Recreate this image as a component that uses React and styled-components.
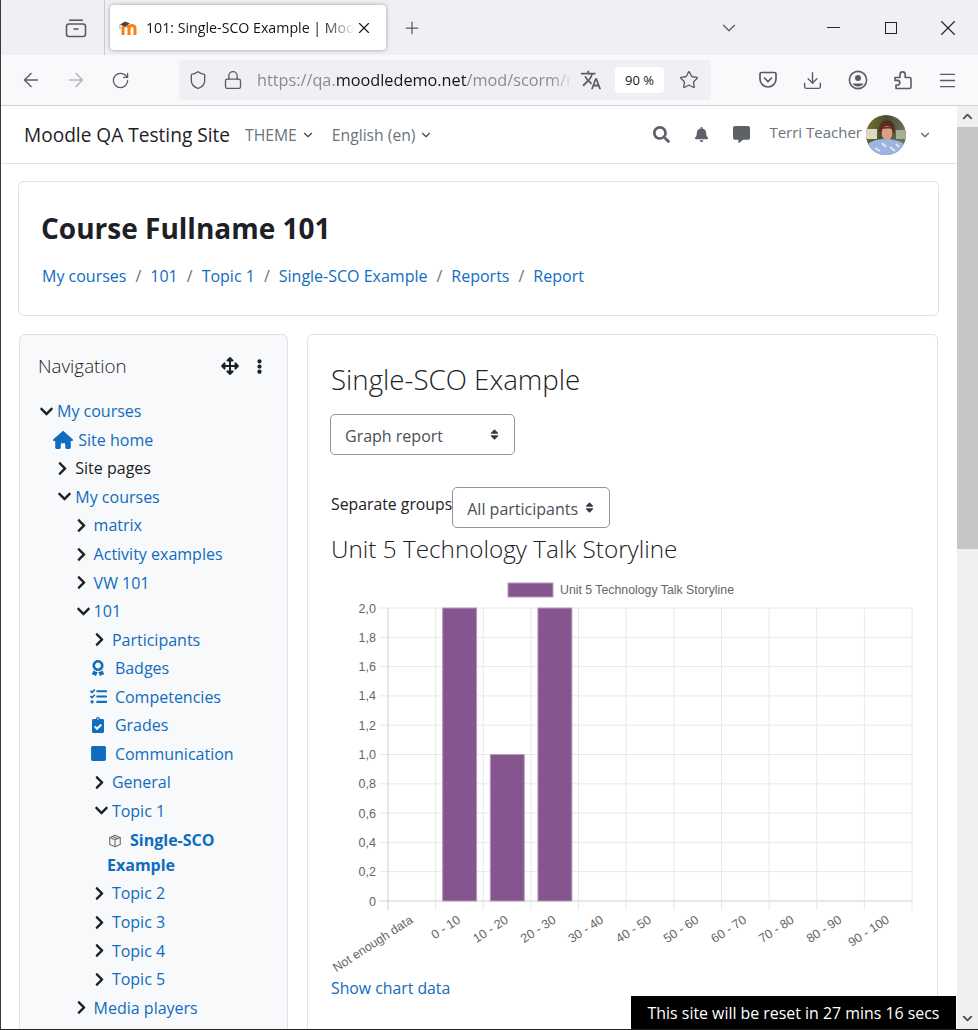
import styled, { createGlobalStyle } from 'styled-components'
import { ArrowLeft, ArrowRight, RotateCw, Shield, Lock, Star, Download, Menu, X, Plus, ChevronDown, ChevronUp, Minus } from 'lucide-react'
import { MdTranslate } from 'react-icons/md'
import {
  FaAward, FaClipboardCheck, FaSquare, FaArrowsAlt, FaEllipsisV, FaSearch, FaBell,
  FaCommentAlt, FaChevronRight, FaChevronDown, FaSort, FaTasks,
} from 'react-icons/fa'
import { FaHouse } from 'react-icons/fa6'

const Global = createGlobalStyle`
  html, body { margin: 0; padding: 0; background: white; }
  * { box-sizing: border-box; }
  body { font-family: "Open Sans", "Noto Sans", sans-serif; color: #1d2125; }
`

const Window = styled.div`
  width: 978px;
  height: 1030px;
  display: flex;
  flex-direction: column;
  overflow: hidden;
  position: relative;
  border-left: 1px solid #3a3a3a;
  border-bottom: 1px solid #222;
`

const TabBar = styled.div`
  height: 55px;
  flex: none;
  background: #f0f0f4;
  display: flex;
  align-items: center;
  color: #5b5b66;
`

const ViewBtn = styled.div`
  width: 104px;
  height: 100%;
  border-right: 1px solid #c9c9cf;
  display: flex;
  align-items: center;
  justify-content: flex-end;
  padding-right: 17px;
`

const Tab = styled.div`
  width: 276px;
  height: 45px;
  margin-left: 5px;
  background: white;
  border-radius: 4px;
  box-shadow: 0 0 4px rgba(0,0,0,.35);
  display: flex;
  align-items: center;
  padding: 0 13px 0 9px;
`

const TabTitle = styled.span`
  flex: 1;
  margin-left: 7px;
  font-size: 14.2px;
  color: #15141a;
  white-space: nowrap;
  overflow: hidden;
  -webkit-mask-image: linear-gradient(to right, black 85%, transparent 100%);
`

const TabPlus = styled.div`
  margin-left: 16px;
  display: flex;
`

const WinBtns = styled.div`
  margin-left: auto;
  margin-right: 2px;
  display: flex;
  align-items: center;
  color: #222;
`

const WinBtn = styled.div`
  width: 57px;
  display: flex;
  justify-content: center;
`

const TabsList = styled.div`
  color: #5b5b66;
  margin-right: 65px;
  display: flex;
`

const MaxBox = styled.div`
  width: 12px;
  height: 12px;
  border: 1px solid #222;
`

const ToolBar = styled.div`
  height: 51px;
  flex: none;
  background: #f9f9fb;
  border-bottom: 1px solid #cfcfd8;
  display: flex;
  align-items: center;
  padding-left: 7px;
  color: #5b5b66;
`

const ToolBtn = styled.div`
  width: 45px;
  display: flex;
  justify-content: center;
  color: ${props => props.$off ? '#b4b4ba' : '#5b5b66'};
`

const UrlBar = styled.div`
  width: 532px;
  height: 40px;
  margin: 0 34px 0 36px;
  background: #f0f0f4;
  border-radius: 4px;
  display: flex;
  align-items: center;
  padding-left: 1px;
`

const UrlIcon = styled.div`
  width: 35px;
  display: flex;
  justify-content: center;
  flex: none;
`

const UrlText = styled.div`
  width: 316px;
  margin-left: 7px;
  font-size: 16.25px;
  color: #8a8a94;
  white-space: nowrap;
  overflow: hidden;
  -webkit-mask-image: linear-gradient(to right, black 93%, transparent 100%);
  b { font-weight: 400; color: #15141a; }
`

const ZoomBadge = styled.div`
  width: 49px;
  height: 26px;
  margin: 0 7px 0 7px;
  background: white;
  border-radius: 4px;
  font-size: 13px;
  color: #15141a;
  display: flex;
  align-items: center;
  justify-content: center;
`

const Viewport = styled.div`
  flex: 1;
  min-height: 0;
  display: flex;
`

const Page = styled.div`
  flex: 1;
  min-width: 0;
  overflow: hidden;
`

const Scrollbar = styled.div`
  width: 21px;
  flex: none;
  background: #f0f0f0;
  display: flex;
  flex-direction: column;
  color: #505050;
`

const ScrollBtn = styled.div`
  height: 21px;
  flex: none;
  display: flex;
  align-items: center;
  justify-content: center;
  margin-top: ${props => props.$end ? 'auto' : '0'};
`

const ScrollThumb = styled.div`
  height: 422px;
  flex: none;
  background: #c6c6c6;
`

const SiteNav = styled.div`
  height: 58px;
  border-bottom: 1px solid #dee2e6;
  display: flex;
  align-items: center;
  padding-left: 23px;
`

const Brand = styled.div`
  font-size: 19.1px;
  color: #1d2125;
  margin-right: 15px;
`

const NavMenu = styled.div`
  font-size: 15.7px;
  color: #6a737b;
  display: flex;
  align-items: center;
  gap: 4px;
  margin-right: 17px;
  svg { color: #3f454b; }
`

const NavIcons = styled.div`
  margin-left: auto;
  padding-right: 13px;
  display: flex;
  align-items: center;
  color: #5c6268;
`

const NavIcon = styled.div`
  width: ${props => props.$w || 40}px;
  display: flex;
  justify-content: center;
`

const UserName = styled.div`
  font-size: 15px;
  color: #6a737b;
  margin: 0 4px 0 8px;
  padding-bottom: 5px;
`

const Avatar = styled.svg`
  width: 40px;
  height: 40px;
  display: block;
  margin-top: 1px;
`

const Content = styled.div`
  padding: 17px 18px 0 17px;
`

const HeaderCard = styled.div`
  height: 135px;
  border: 1px solid #dee2e6;
  border-radius: 6px;
  padding: 27px 23px 0;
  margin-bottom: 18px;
`

const CourseTitle = styled.h1`
  margin: 0 0 17px -1px;
  font-size: 28px;
  line-height: 38px;
  font-weight: 700;
  color: #1d2125;
`

const Crumbs = styled.div`
  font-size: 16px;
  line-height: 24px;
  color: #6a737b;
  display: flex;
  gap: 9px;
`

const Link = styled.span`
  color: #0f6cbf;
`

const Columns = styled.div`
  display: flex;
  gap: 19px;
  padding-left: 1px;
`

const NavBlock = styled.div`
  width: 269px;
  flex: none;
  height: 760px;
  background: #f8f9fa;
  border: 1px solid #dee2e6;
  border-radius: 6px;
  padding: 17px 0 0 18px;
`

const BlockHead = styled.div`
  height: 28px;
  display: flex;
  align-items: center;
  font-size: 18.8px;
  font-weight: 300;
  color: #1d2125;
  margin-bottom: 17px;
`

const BlockTools = styled.div`
  margin-left: auto;
  margin-right: 20px;
  display: flex;
  align-items: center;
  gap: 13px;
  color: #1d2125;
`

const Tree = styled.div`
  font-size: 16px;
  color: #1d2125;
  padding-left: 1px;
`

const Row = styled.div`
  height: 28.55px;
  display: flex;
  align-items: center;
  padding-left: ${props => props.$level * 18.3}px;
  color: ${props => props.$plain ? '#1d2125' : '#0f6cbf'};
`

const Caret = styled.span`
  width: 18px;
  flex: none;
  display: flex;
  color: #1d2125;
  svg { margin-left: ${props => props.$open ? '0' : '-2px'}; }
`

const IconSlot = styled.span`
  width: 25px;
  flex: none;
  margin-left: -4px;
  display: flex;
  color: #0f6cbf;
`

const CurrentRow = styled.div`
  width: 135px;
  margin-left: 68px;
  padding-top: 3px;
  line-height: 25px;
  font-weight: 700;
  color: #0f6cbf;
  margin-bottom: 1px;
  svg { vertical-align: -2px; margin-right: 8px; margin-left: 1px; }
`

const Main = styled.div`
  width: 631px;
  flex: none;
  height: 760px;
  border: 1px solid #dee2e6;
  border-radius: 6px;
  padding: 22px 0 0 22px;
`

const ActivityTitle = styled.h2`
  margin: 0 0 13px 1px;
  font-size: 27.7px;
  line-height: 44px;
  font-weight: 300;
  color: #1d2125;
`

const Select = styled.div`
  width: ${props => props.$w}px;
  height: 41px;
  flex: none;
  border: 1px solid #8f959e;
  border-radius: 5px;
  font-size: 16px;
  color: #495057;
  display: flex;
  align-items: center;
  justify-content: space-between;
  padding: 2px 13px 0 14px;
  svg { color: #343a40; margin-top: -2px; }
`

const GroupRow = styled.div`
  display: flex;
  align-items: flex-start;
  margin: 32px 0 0 1px;
  font-size: 15.8px;
  line-height: 34px;
`

const ChartTitle = styled.h3`
  margin: 2px 0 0 1px;
  font-size: 24.3px;
  line-height: 38px;
  font-weight: 300;
  color: #1d2125;
`

const ChartSvg = styled.svg`
  display: block;
  width: 590px;
  height: 395px;
  margin-top: 12px;
`

const ShowData = styled.div`
  margin: 1px 0 0 1px;
  font-size: 15.8px;
  line-height: 24px;
  color: #0f6cbf;
`

const ResetBanner = styled.div`
  position: absolute;
  left: 630px;
  bottom: 0;
  width: 325px;
  height: 33px;
  padding-top: 1px;
  background: black;
  color: white;
  font-size: 15.9px;
  display: flex;
  align-items: center;
  justify-content: center;
`

function Favicon(){
  return(
    <svg width="20" height="16" viewBox="0 0 20 16">
      <path d="M4 15V8.5c0-2 1.5-3 3-3s3 1 3 3V15M10 8.5c0-2 1.5-3 3-3s3 1 3 3V15" fill="none" stroke="#f98012" strokeWidth="3"/>
      <path d="M1 4.5 6 1.5l5 2-5 3z" fill="#444"/>
      <path d="M1 4.5V9" stroke="#999" strokeWidth="1"/>
    </svg>
  )
}

function FirefoxView(){
  return(
    <svg width="22" height="20" viewBox="0 0 22 20" fill="none" stroke="#5b5b66" strokeWidth="1.6">
      <rect x="1.5" y="6" width="19" height="12.5" rx="2.5"/>
      <path d="M4 2.2h14"/>
      <path d="M8.5 11h5"/>
    </svg>
  )
}

function Pocket(){
  return(
    <svg width="20" height="20" viewBox="0 0 20 20" fill="none" stroke="#5b5b66" strokeWidth="1.7">
      <path d="M3.5 2.5h13a1.5 1.5 0 0 1 1.5 1.5v5a8 8 0 0 1-16 0V4a1.5 1.5 0 0 1 1.5-1.5z"/>
      <path d="M6.5 8 10 11.5 13.5 8" strokeLinecap="round"/>
    </svg>
  )
}

function Account(){
  return(
    <svg width="20" height="20" viewBox="0 0 20 20">
      <circle cx="10" cy="10" r="8.6" fill="none" stroke="#5b5b66" strokeWidth="1.6"/>
      <circle cx="10" cy="8" r="3" fill="#5b5b66"/>
      <path d="M4.5 13.5h11a6.5 6.5 0 0 1-11 0z" fill="#5b5b66"/>
    </svg>
  )
}

function Extensions(){
  return(
    <svg width="20" height="20" viewBox="0 0 20 20" fill="none" stroke="#5b5b66" strokeWidth="1.6" strokeLinejoin="round">
      <path d="M2 7.5h5V4.5a2.6 2.6 0 0 1 5.2 0v3h4.3A1.5 1.5 0 0 1 18 9v8a1.5 1.5 0 0 1-1.5 1.5H3V15h1.5a2.3 2.3 0 0 0 0-4.6H2z"/>
    </svg>
  )
}

function Photo(){
  return(
    <Avatar viewBox="0 0 40 40">
      <defs>
        <clipPath id="round"><circle cx="20" cy="20" r="20"/></clipPath>
        <linearGradient id="bg" x1="0" y1="0" x2="1" y2="0.3">
          <stop offset="0" stopColor="#7d7636"/>
          <stop offset="0.5" stopColor="#4a4f2c"/>
          <stop offset="1" stopColor="#66755a"/>
        </linearGradient>
      </defs>
      <g clipPath="url(#round)">
        <rect width="40" height="40" fill="url(#bg)"/>
        <rect x="0" y="14" width="11" height="10" fill="#d9d9c6"/>
        <rect x="30" y="15" width="10" height="9" fill="#a7ae9c"/>
        <path d="M0 40V31c5-6 12-7 20-7s15 2 20 7v9z" fill="#9db4e2"/>
        <path d="M9 33l5 3M24 32l5 4M16 28l4 4M30 29l3 3" stroke="#dfe6f5" strokeWidth="2"/>
        <ellipse cx="21" cy="14" rx="8" ry="9" fill="#5a2c22"/>
        <ellipse cx="21" cy="18" rx="5.5" ry="7" fill="#d9a084"/>
        <path d="M15 14c3-3 9-3 12 0-3-.8-9-.8-12 0z" fill="#5a2c22"/>
      </g>
    </Avatar>
  )
}

const ticksY = ['2,0', '1,8', '1,6', '1,4', '1,2', '1,0', '0,8', '0,6', '0,4', '0,2', '0']
const bands = ['Not enough data', '0 - 10', '10 - 20', '20 - 30', '30 - 40', '40 - 50', '50 - 60', '60 - 70', '70 - 80', '80 - 90', '90 - 100']
const values = [0, 2, 1, 2, 0, 0, 0, 0, 0, 0, 0]

function Chart(){
  const left = 388, right = 912, top = 608, bottom = 901
  const stepX = (right - left) / 11
  const stepY = (bottom - top) / 10
  return(
    <ChartSvg viewBox="330 580 590 395">
      <rect x="508" y="583" width="45" height="14" fill="#86548f" stroke="#b79ebd"/>
      <text x="560" y="594" fontFamily="Liberation Sans" fontSize="12.5" fill="#666" textLength="174" lengthAdjust="spacingAndGlyphs">Unit 5 Technology Talk Storyline</text>
      {ticksY.map((t, i) => (
        <g key={t}>
          <line x1="379" x2={right} y1={top + i * stepY} y2={top + i * stepY} stroke={i === 10 ? '#d0d0d0' : '#e8e8e8'}/>
          <text x="376" y={top + i * stepY + 4.5} textAnchor="end" fontFamily="Liberation Sans" fontSize="12.5" fill="#666">{t}</text>
        </g>
      ))}
      {Array.from({length: 12}).map((_, i) => (
        <line key={i} x1={left + i * stepX} x2={left + i * stepX} y1={top} y2="910" stroke={i === 0 ? '#cfcfcf' : '#e8e8e8'}/>
      ))}
      {values.map((v, i) => v > 0 && (
        <rect key={i} x={left + i * stepX + 7} width="34" y={bottom - v * 5 * stepY} height={v * 5 * stepY} fill="#86548f" stroke="#b79ebd"/>
      ))}
      {bands.map((b, i) => {
        const cx = left + (i + 0.5) * stepX + 2
        return <text key={b} x={cx} y="922" transform={`rotate(-33 ${cx} 922)`} textAnchor="end" fontFamily="Liberation Sans" fontSize="12.5" fill="#666">{b}</text>
      })}
    </ChartSvg>
  )
}

function Chev({open}){
  return <Caret $open={open}>{open ? <FaChevronDown size={15}/> : <FaChevronRight size={15}/>}</Caret>
}

function App(){
  return(
    <>
      <Global/>
      <Window>
        <TabBar>
          <ViewBtn><FirefoxView/></ViewBtn>
          <Tab>
            <Favicon/>
            <TabTitle>101: Single-SCO Example | Moo</TabTitle>
            <X size={18} color="#15141a" strokeWidth={1.5}/>
          </Tab>
          <TabPlus><Plus size={20} strokeWidth={1.5}/></TabPlus>
          <WinBtns>
            <TabsList><ChevronDown size={22} strokeWidth={1.4}/></TabsList>
            <WinBtn><Minus size={21} strokeWidth={1.1}/></WinBtn>
            <WinBtn><MaxBox/></WinBtn>
            <WinBtn><X size={26} strokeWidth={1}/></WinBtn>
          </WinBtns>
        </TabBar>
        <ToolBar>
          <ToolBtn><ArrowLeft size={22} strokeWidth={1.6}/></ToolBtn>
          <ToolBtn $off><ArrowRight size={22} strokeWidth={1.6}/></ToolBtn>
          <ToolBtn><RotateCw size={19} strokeWidth={1.6}/></ToolBtn>
          <UrlBar>
            <UrlIcon><Shield size={20} strokeWidth={1.6}/></UrlIcon>
            <UrlIcon><Lock size={20} strokeWidth={1.6}/></UrlIcon>
            <UrlText>https://qa.<b>moodledemo.net</b>/mod/scorm/r</UrlText>
            <UrlIcon><MdTranslate size={22}/></UrlIcon>
            <ZoomBadge>90 %</ZoomBadge>
            <UrlIcon><Star size={20} strokeWidth={1.6}/></UrlIcon>
          </UrlBar>
          <ToolBtn><Pocket/></ToolBtn>
          <ToolBtn><Download size={21} strokeWidth={1.6}/></ToolBtn>
          <ToolBtn><Account/></ToolBtn>
          <ToolBtn><Extensions/></ToolBtn>
          <ToolBtn><Menu size={21} strokeWidth={1.5}/></ToolBtn>
        </ToolBar>
        <Viewport>
          <Page>
            <SiteNav>
              <Brand>Moodle QA Testing Site</Brand>
              <NavMenu>THEME <ChevronDown size={14}/></NavMenu>
              <NavMenu>English (en) <ChevronDown size={14}/></NavMenu>
              <NavIcons>
                <NavIcon><FaSearch size={17}/></NavIcon>
                <NavIcon><FaBell size={15}/></NavIcon>
                <NavIcon><FaCommentAlt size={17}/></NavIcon>
                <UserName>Terri Teacher</UserName>
                <Photo/>
                <NavIcon $w={38}><ChevronDown size={14}/></NavIcon>
              </NavIcons>
            </SiteNav>
            <Content>
              <HeaderCard>
                <CourseTitle>Course Fullname 101</CourseTitle>
                <Crumbs>
                  <Link>My courses</Link>/<Link>101</Link>/<Link>Topic 1</Link>/<Link>Single-SCO Example</Link>/<Link>Reports</Link>/<Link>Report</Link>
                </Crumbs>
              </HeaderCard>
              <Columns>
                <NavBlock>
                  <BlockHead>
                    Navigation
                    <BlockTools><FaArrowsAlt size={18}/><FaEllipsisV size={15}/></BlockTools>
                  </BlockHead>
                  <Tree>
                    <Row $level={0}><Chev open/>My courses</Row>
                    <Row $level={1}><IconSlot><FaHouse size={20}/></IconSlot>Site home</Row>
                    <Row $level={1} $plain><Chev/>Site pages</Row>
                    <Row $level={1}><Chev open/>My courses</Row>
                    <Row $level={2}><Chev/>matrix</Row>
                    <Row $level={2}><Chev/>Activity examples</Row>
                    <Row $level={2}><Chev/>VW 101</Row>
                    <Row $level={2}><Chev open/>101</Row>
                    <Row $level={3}><Chev/>Participants</Row>
                    <Row $level={3}><IconSlot><FaAward size={16}/></IconSlot>Badges</Row>
                    <Row $level={3}><IconSlot><FaTasks size={17}/></IconSlot>Competencies</Row>
                    <Row $level={3}><IconSlot><FaClipboardCheck size={16}/></IconSlot>Grades</Row>
                    <Row $level={3}><IconSlot><FaSquare size={17}/></IconSlot>Communication</Row>
                    <Row $level={3}><Chev/>General</Row>
                    <Row $level={3}><Chev open/>Topic 1</Row>
                    <CurrentRow>
                      <svg width="14" height="14" viewBox="0 0 16 16" fill="none" stroke="#666" strokeWidth="1.2">
                        <path d="M8 1.5 14 4v8l-6 2.5L2 12V4z"/>
                        <path d="M2 4l6 2.5L14 4M8 6.5v8M5 2.8l6 2.4"/>
                      </svg>
                      Single-SCO Example
                    </CurrentRow>
                    <Row $level={3}><Chev/>Topic 2</Row>
                    <Row $level={3}><Chev/>Topic 3</Row>
                    <Row $level={3}><Chev/>Topic 4</Row>
                    <Row $level={3}><Chev/>Topic 5</Row>
                    <Row $level={2}><Chev/>Media players</Row>
                  </Tree>
                </NavBlock>
                <Main>
                  <ActivityTitle>Single-SCO Example</ActivityTitle>
                  <Select $w={185}>Graph report <FaSort size={13}/></Select>
                  <GroupRow>
                    Separate groups
                    <Select $w={158}>All participants <FaSort size={13}/></Select>
                  </GroupRow>
                  <ChartTitle>Unit 5 Technology Talk Storyline</ChartTitle>
                  <Chart/>
                  <ShowData>Show chart data</ShowData>
                </Main>
              </Columns>
            </Content>
          </Page>
          <Scrollbar>
            <ScrollBtn><ChevronUp size={15} strokeWidth={3}/></ScrollBtn>
            <ScrollThumb/>
            <ScrollBtn $end><ChevronDown size={15} strokeWidth={3}/></ScrollBtn>
          </Scrollbar>
        </Viewport>
        <ResetBanner>This site will be reset in 27 mins 16 secs</ResetBanner>
      </Window>
    </>
  )
}

export default App
